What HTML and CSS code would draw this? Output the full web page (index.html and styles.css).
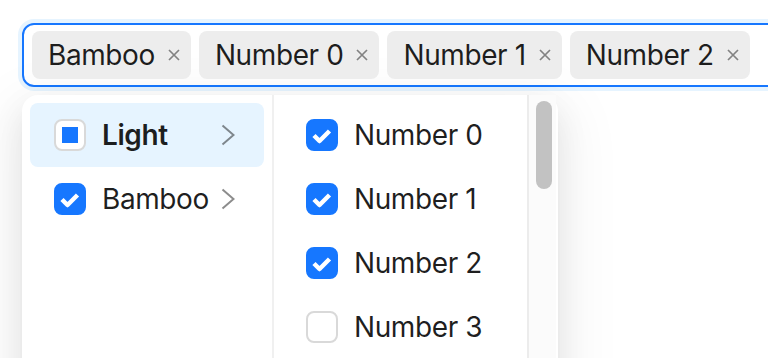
FILE: index.html
```html
<!doctype html>
<html lang="en">
<head>
  <meta charset="UTF-8" />
  <meta name="viewport" content="width=device-width, initial-scale=1.0" />
  <title>Cascader</title>
  <link rel="stylesheet" href="styles.css">
</head>
<body>

<section class="page">
  <div class="select">
    <span class="tag"><span class="tag-text">Bamboo</span><svg class="tag-close" viewBox="0 0 12 12"><path d="M1,1 L11,11 M11,1 L1,11" /></svg></span>
    <span class="tag"><span class="tag-text">Number 0</span><svg class="tag-close" viewBox="0 0 12 12"><path d="M1,1 L11,11 M11,1 L1,11" /></svg></span>
    <span class="tag"><span class="tag-text">Number 1</span><svg class="tag-close" viewBox="0 0 12 12"><path d="M1,1 L11,11 M11,1 L1,11" /></svg></span>
    <span class="tag"><span class="tag-text">Number 2</span><svg class="tag-close" viewBox="0 0 12 12"><path d="M1,1 L11,11 M11,1 L1,11" /></svg></span>
  </div>

  <div class="dropdown">
    <ul class="menu menu-first">
      <li class="item item-active">
        <span class="box box-half"><span class="box-inner"></span></span>
        <span class="item-text bold">Light</span>
        <svg class="arrow" viewBox="0 0 14 22"><path d="M1.5,1.5 L12.5,11 L1.5,20.5" /></svg>
      </li>
      <li class="item">
        <span class="box box-on"><svg viewBox="0 0 32 32"><path d="M8,16.5 L13.5,22 L23.5,12" /></svg></span>
        <span class="item-text">Bamboo</span>
        <svg class="arrow" viewBox="0 0 14 22"><path d="M1.5,1.5 L12.5,11 L1.5,20.5" /></svg>
      </li>
    </ul>
    <div class="menu-wrap">
      <ul class="menu menu-second">
        <li class="item">
          <span class="box box-on"><svg viewBox="0 0 32 32"><path d="M8,16.5 L13.5,22 L23.5,12" /></svg></span>
          <span class="item-text">Number 0</span>
        </li>
        <li class="item">
          <span class="box box-on"><svg viewBox="0 0 32 32"><path d="M8,16.5 L13.5,22 L23.5,12" /></svg></span>
          <span class="item-text">Number 1</span>
        </li>
        <li class="item">
          <span class="box box-on"><svg viewBox="0 0 32 32"><path d="M8,16.5 L13.5,22 L23.5,12" /></svg></span>
          <span class="item-text">Number 2</span>
        </li>
        <li class="item">
          <span class="box"></span>
          <span class="item-text">Number 3</span>
        </li>
      </ul>
      <div class="scrollbar"><div class="thumb"></div></div>
    </div>
  </div>
</section>

</body>
</html>
```

FILE: styles.css
```css
html, body {
  margin: 0;
  padding: 0;
  background: #fff;
  overflow: hidden;
}
* {
  box-sizing: border-box;
}
.page {
  padding: 23px 0 0 22px;
  width: 900px;
  height: 358px;
  overflow: hidden;
  font-family: "Inter", "Noto Sans", sans-serif;
  font-size: 28px;
  letter-spacing: -0.4px;
  color: rgba(0,0,0,0.88);
}
/*Select box*/
.select {
  display: flex;
  gap: 8px;
  width: 820px;
  height: 64px;
  padding: 6px 8px;
  border: 2px solid #1677ff;
  border-radius: 12px;
  box-shadow: 0 0 0 4px rgba(5,145,255,0.1);
}
.tag {
  display: flex;
  align-items: center;
  height: 48px;
  padding: 0 11px 0 16px;
  background: #ededed;
  border-radius: 8px;
  white-space: nowrap;
}
.tag-close {
  width: 12px;
  height: 12px;
  margin-left: 13px;
  fill: none;
  stroke: rgba(0,0,0,0.45);
  stroke-width: 1.7;
}
/*Dropdown*/
.dropdown {
  display: flex;
  width: 536px;
  height: 300px;
  margin-top: 8px;
  background: #fff;
  border-radius: 16px 16px 0 0;
  box-shadow: 0 12px 32px 0 rgba(0,0,0,0.08),
              0 6px 12px -8px rgba(0,0,0,0.12),
              0 18px 56px 16px rgba(0,0,0,0.05);
}
.menu {
  margin: 0;
  padding: 8px;
  list-style: none;
}
.menu-first {
  width: 252px;
  border-right: 2px solid #f0f0f0;
}
.menu-wrap {
  display: flex;
  flex: 1;
}
.menu-second {
  width: 253px;
}
.item {
  display: flex;
  align-items: center;
  height: 64px;
  padding: 0 24px;
  line-height: 44px;
  border-radius: 8px;
  white-space: nowrap;
}
.item-active {
  background: #e6f4ff;
}
.item-text {
  flex: 1;
  margin-left: 16px;
}
.bold {
  font-weight: 600;
}
.arrow {
  width: 14px;
  height: 22px;
  margin-right: 5px;
  fill: none;
  stroke: rgba(0,0,0,0.45);
  stroke-width: 2;
}
/*Checkbox*/
.box {
  display: flex;
  align-items: center;
  justify-content: center;
  flex: none;
  width: 32px;
  height: 32px;
  border: 2px solid #d9d9d9;
  border-radius: 8px;
  background: #fff;
}
.box-on {
  background: #1677ff;
  border-color: #1677ff;
}
.box-on svg {
  flex: none;
  width: 32px;
  height: 32px;
  fill: none;
  stroke: #fff;
  stroke-width: 4.5;
  stroke-linejoin: round;
}
.box-inner {
  width: 16px;
  height: 16px;
  background: #1677ff;
}
/*Scrollbar*/
.scrollbar {
  width: 29px;
  padding: 6px 5px 0 7px;
  background: #fbfbfb;
  border-left: 2px solid #ececec;
}
.thumb {
  width: 16px;
  height: 88px;
  background: #c2c2c2;
  border-radius: 8px;
}
```
